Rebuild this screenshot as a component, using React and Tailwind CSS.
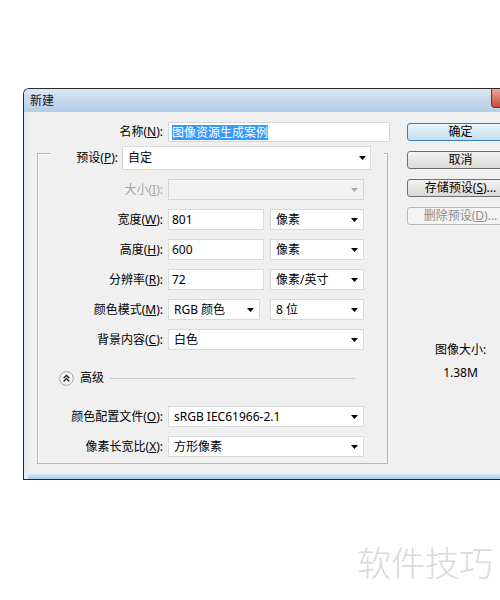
import React from "react";

function Arrow({ disabled }) {
  return (
    <svg width="7" height="4" viewBox="0 0 7 4" className="shrink-0">
      <path d="M0 0H7L3.5 4Z" fill={disabled ? "#a9a9a9" : "#000"} />
    </svg>
  );
}

function Select({ w, text, disabled }) {
  return (
    <div
      className={`${w} h-[21px] flex items-center justify-between pl-[5px] pr-[5px] border ${
        disabled ? "border-[#d4d4d4] bg-[#f3f3f3]" : "border-[#dadada] bg-white"
      }`}
    >
      <span>{text}</span>
      <Arrow disabled={disabled} />
    </div>
  );
}

function Input({ w, text }) {
  return (
    <div className={`${w} h-[21px] flex items-center pl-[3px] border border-[#dadada] bg-white`}>
      {text}
    </div>
  );
}

function Row({ label, children, disabled, className }) {
  return (
    <div className={`flex items-center h-[21px] ${className}`}>
      <div className={`w-[125px] text-right ${disabled ? "text-[#a3a3a3]" : ""}`}>{label}</div>
      <div className="ml-[5px] flex items-center">{children}</div>
    </div>
  );
}

function Button({ children, kind }) {
  const cls =
    kind === "default"
      ? "border-[#3c7fb1] bg-linear-to-b from-[#eaf5fc] to-[#c3def0] text-black"
      : kind === "disabled"
      ? "border-[#b5b9bc] bg-[#f4f4f4] text-[#8d8d8d]"
      : "border-[#707070] bg-linear-to-b from-[#f3f3f3] to-[#d9d9d9] text-black";
  return (
    <div className={`h-[18px] rounded-[3px] border flex items-center justify-center ${cls}`}>
      {children}
    </div>
  );
}

export default function App() {
  return (
    <div className="w-[500px] h-[600px] overflow-hidden bg-white font-['Noto_Sans','Noto_Sans_CJK_SC',sans-serif] text-[12px] text-black leading-none">
      <div className="pt-[88px] pl-[23px]">
        <div className="w-[520px] border-l border-t border-b border-[#2a2a2a] rounded-tl-[6px] overflow-hidden">
          {/* title bar */}
          <div className="h-[23px] flex items-start bg-linear-to-b from-[#dae6f3] to-[#b6cde6]">
            <div className="pl-[6px] h-full flex items-center text-[#151515]">新建</div>
            <div className="flex-1" />
            <div className="mr-[9px] w-[43px] h-[19px] rounded-b-[4px] border border-t-0 border-[#7a3028] bg-linear-to-b from-[#e9a797] to-[#c6483a]" />
          </div>
          {/* body */}
          <div className="pl-[4px] bg-[#e4ecf5]">
            <div className="bg-[#f0f0f0] h-[360px] flex">
              {/* left column */}
              <div className="w-[379px] pt-[10px]">
                <div className="flex items-center h-[20px]">
                  <div className="w-[135px] text-right">
                    名称(<u>N</u>):
                  </div>
                  <div className="ml-[5px] w-[222px] h-[20px] border border-[#d3d8de] bg-white flex items-center pl-[3px]">
                    <span className="bg-[#3399ff] text-white leading-[15px]">图像资源生成案例</span>
                  </div>
                </div>
                <div className="mt-[11px] ml-[9px] w-[351px] h-[311px] border border-[#b8b8b8] shadow-[inset_1px_1px_0_#ffffff]">
                  {/* preset row */}
                  <div className="mt-[-8px] ml-[12px] w-[334px] h-[24px] bg-[#f0f0f0] flex items-center">
                    <div className="w-[68px] text-right">
                      预设(<u>P</u>):
                    </div>
                    <div className="ml-[4px] w-[249px] h-[24px] flex items-center justify-between pl-[5px] pr-[4px] border border-[#dadada] bg-white">
                      <span>自定</span>
                      <Arrow />
                    </div>
                  </div>
                  <Row className="mt-[9px]" disabled label={<>大小(<u>I</u>):</>}>
                    <Select w="w-[196px]" text="" disabled />
                  </Row>
                  <Row className="mt-[9px]" label={<>宽度(<u>W</u>):</>}>
                    <Input w="w-[96px]" text="801" />
                    <div className="ml-[6px]">
                      <Select w="w-[94px]" text="像素" />
                    </div>
                  </Row>
                  <Row className="mt-[9px]" label={<>高度(<u>H</u>):</>}>
                    <Input w="w-[96px]" text="600" />
                    <div className="ml-[6px]">
                      <Select w="w-[94px]" text="像素" />
                    </div>
                  </Row>
                  <Row className="mt-[9px]" label={<>分辨率(<u>R</u>):</>}>
                    <Input w="w-[96px]" text="72" />
                    <div className="ml-[6px]">
                      <Select w="w-[94px]" text="像素/英寸" />
                    </div>
                  </Row>
                  <Row className="mt-[9px]" label={<>颜色模式(<u>M</u>):</>}>
                    <Select w="w-[92px]" text="RGB 颜色" />
                    <div className="ml-[10px]">
                      <Select w="w-[94px]" text="8 位" />
                    </div>
                  </Row>
                  <Row className="mt-[9px]" label={<>背景内容(<u>C</u>):</>}>
                    <Select w="w-[196px]" text="白色" />
                  </Row>
                  {/* advanced */}
                  <div className="mt-[20px] h-[16px] flex items-center pl-[21px]">
                    <svg width="15" height="15" viewBox="0 0 15 15" className="shrink-0">
                      <circle cx="7.5" cy="7.5" r="6.8" fill="#fdfdfd" stroke="#a3a3a3" />
                      <path d="M4.6 7.2 L7.5 4.4 L10.4 7.2" stroke="#1a1a1a" strokeWidth="1.4" fill="none" />
                      <path d="M4.6 10.4 L7.5 7.6 L10.4 10.4" stroke="#1a1a1a" strokeWidth="1.4" fill="none" />
                    </svg>
                    <span className="ml-[6px]">高级</span>
                    <div className="ml-[6px] w-[245px] h-px bg-[#c9c9c9]" />
                  </div>
                  <Row className="mt-[20px]" label={<>颜色配置文件(<u>O</u>):</>}>
                    <Select w="w-[196px]" text="sRGB IEC61966-2.1" />
                  </Row>
                  <Row className="mt-[9px]" label={<>像素长宽比(<u>X</u>):</>}>
                    <Select w="w-[196px]" text="方形像素" />
                  </Row>
                </div>
              </div>
              {/* right column */}
              <div className="w-[107px] pt-[11px] flex flex-col">
                <div className="flex flex-col gap-[10px]">
                  <Button kind="default">确定</Button>
                  <Button>取消</Button>
                  <Button>
                    存储预设(<u>S</u>)...
                  </Button>
                  <Button kind="disabled">
                    删除预设(<u>D</u>)...
                  </Button>
                </div>
                <div className="mt-[119px] text-center">图像大小:</div>
                <div className="mt-[11px] text-center">1.38M</div>
              </div>
            </div>
            <div className="h-[7px] bg-linear-to-b from-[#f4f7fa] to-[#a9c9e6]" />
          </div>
        </div>
        <div className="mt-[65px] ml-[334px] text-[34px] leading-none font-light text-[#dadada] whitespace-nowrap font-['Noto_Sans_CJK_SC',sans-serif]">
          软件技巧
        </div>
      </div>
    </div>
  );
}
